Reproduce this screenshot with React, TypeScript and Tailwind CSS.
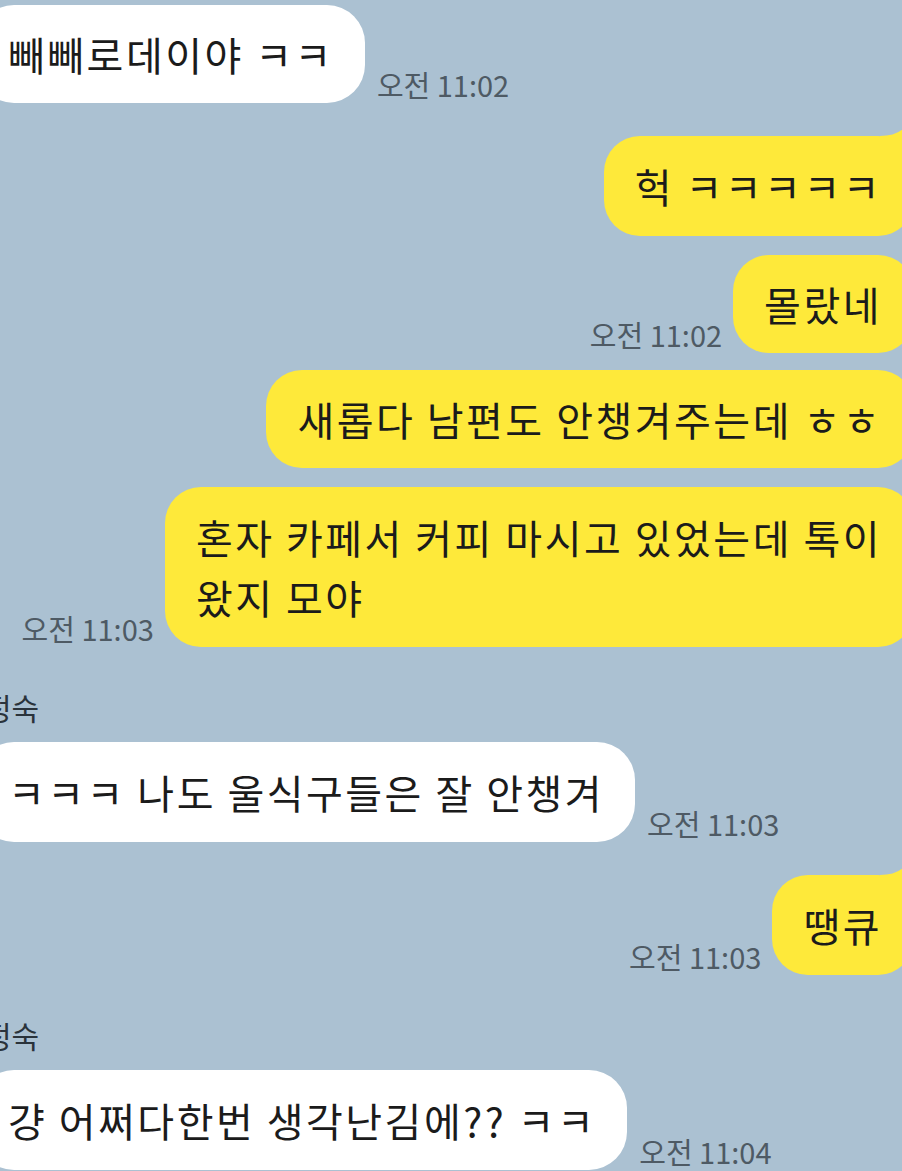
import React from "react";

const FONT = { fontFamily: '"Noto Sans CJK KR", "Noto Sans", sans-serif' };

function Time({ t }: { t: string }) {
  return (
    <span className="text-[29px] leading-none text-[#4e5a64] pb-[4px] whitespace-nowrap shrink-0">
      {t}
    </span>
  );
}

function Left({
  text,
  time,
  mt,
  py = "py-[20px]",
}: {
  text: string;
  time?: string;
  mt: string;
  py?: string;
}) {
  return (
    <div className={`flex items-end gap-[12px] -ml-[24px] ${mt}`}>
      <div
        className={`bg-white rounded-[38px] pl-[32px] pr-[31px] ${py} text-[40px] tracking-[2.5px] leading-[58px] text-[#1b1b1b] whitespace-nowrap`}
      >
        {text}
      </div>
      {time && <Time t={time} />}
    </div>
  );
}

function Right({
  lines,
  time,
  mt,
  tail,
  py = "py-[20px]",
  leading = "leading-[58px]",
}: {
  lines: string[];
  time?: string;
  mt: string;
  tail?: boolean;
  py?: string;
  leading?: string;
}) {
  return (
    <div className={`flex items-end justify-end gap-[11px] -mr-[12px] ${mt}`}>
      {time && <Time t={time} />}
      <div
        className={`relative bg-[#fee93a] rounded-[36px] pl-[31px] pr-[32px] ${py} text-[40px] tracking-[2.5px] ${leading} text-[#1b1b1b] whitespace-nowrap`}
      >
        {lines.map((l, i) => (
          <div key={i}>{l}</div>
        ))}
        {tail && (
          <svg
            className="absolute top-[-8px] right-0"
            width="34"
            height="40"
            viewBox="0 0 34 40"
          >
            <path d="M0 8 Q16 8 24 0 L34 0 L34 40 L0 40 Z" fill="#fee93a" />
          </svg>
        )}
      </div>
    </div>
  );
}

function Name({ n, mt }: { n: string; mt: string }) {
  return (
    <div
      className={`-ml-[16px] h-[30px] text-[30px] leading-none text-[#2a333b] whitespace-nowrap ${mt}`}
    >
      {n}
    </div>
  );
}

export default function App() {
  return (
    <div
      className="w-[902px] h-[1171px] overflow-hidden bg-[#abc1d2] flex flex-col pt-[5px]"
      style={FONT}
    >
      <Left text="빼빼로데이야 ㅋㅋ" time="오전 11:02" mt="mt-0" />
      <Right lines={["헉 ㅋㅋㅋㅋㅋ"]} mt="mt-[33px]" tail py="py-[21px]" />
      <Right lines={["몰랐네"]} time="오전 11:02" mt="mt-[19px]" />
      <Right lines={["새롭다 남편도 안챙겨주는데 ㅎㅎ"]} mt="mt-[17px]" />
      <Right
        lines={["혼자 카페서 커피 마시고 있었는데 톡이", "왔지 모야"]}
        time="오전 11:03"
        mt="mt-[19px]"
        leading="leading-[60px]"
      />
      <Name n="정숙" mt="mt-[45px]" />
      <Left
        text="ㅋㅋㅋ  나도 울식구들은 잘 안챙겨"
        time="오전 11:03"
        mt="mt-[20px]"
        py="py-[21px]"
      />
      <Right lines={["땡큐"]} time="오전 11:03" mt="mt-[33px]" tail py="py-[21px]" />
      <Name n="정숙" mt="mt-[45px]" />
      <Left
        text="걍 어쩌다한번 생각난김에?? ㅋㅋ"
        time="오전 11:04"
        mt="mt-[20px]"
        py="py-[21px]"
      />
    </div>
  );
}
